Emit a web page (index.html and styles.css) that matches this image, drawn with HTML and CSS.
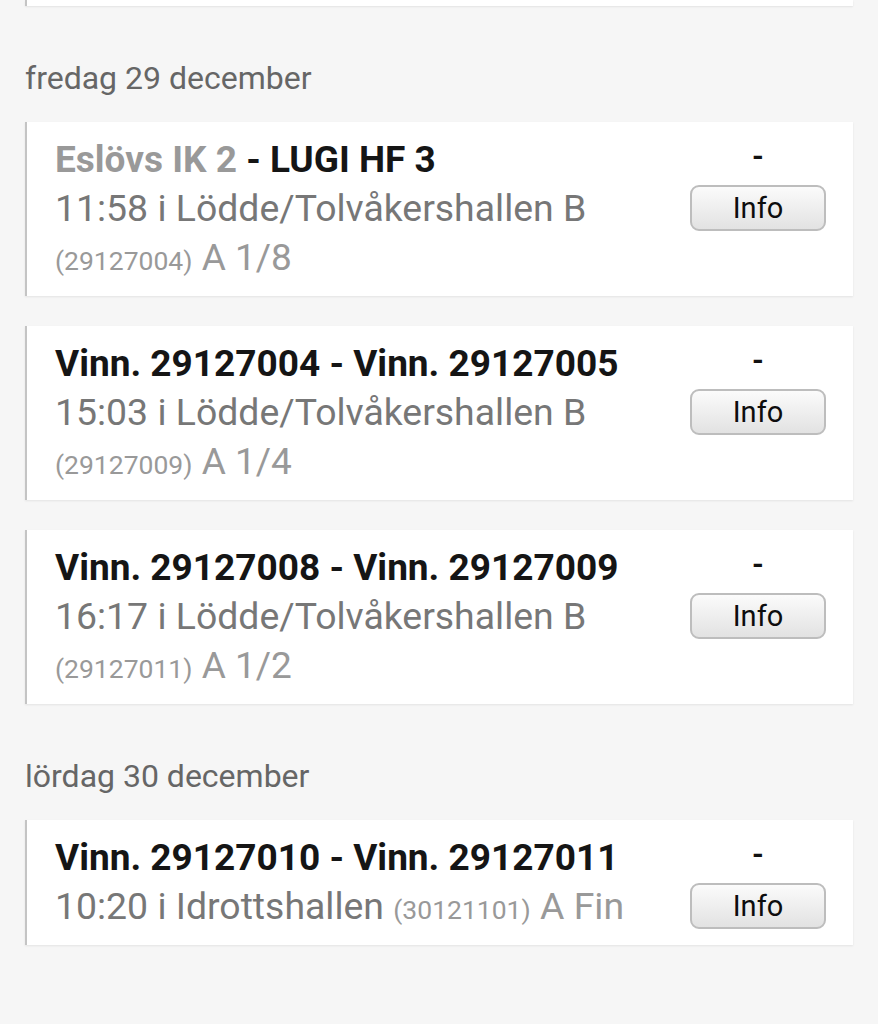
FILE: index.html
```html
<!DOCTYPE html>
<html lang="sv">
<head>
  <meta charset="UTF-8" />
  <meta name="viewport" content="width=device-width, initial-scale=1.0"/>
  <title>Matcher</title>
  <link rel="stylesheet" href="styles.css">
</head>
<body>
  <div class="match match-cut"></div>

  <h2 class="day">fredag 29 december</h2>

  <div class="match">
    <div class="info">
      <div class="teams"><span class="lost">Eslövs IK 2</span> - LUGI HF 3</div>
      <div class="where">11:58 i Lödde/Tolvåkershallen B</div>
      <div class="code"><small>(29127004)</small> A 1/8</div>
    </div>
    <div class="side">
      <div class="score">-</div>
      <button class="btn">Info</button>
    </div>
  </div>

  <div class="match">
    <div class="info">
      <div class="teams">Vinn. 29127004 - Vinn. 29127005</div>
      <div class="where">15:03 i Lödde/Tolvåkershallen B</div>
      <div class="code"><small>(29127009)</small> A 1/4</div>
    </div>
    <div class="side">
      <div class="score">-</div>
      <button class="btn">Info</button>
    </div>
  </div>

  <div class="match">
    <div class="info">
      <div class="teams">Vinn. 29127008 - Vinn. 29127009</div>
      <div class="where">16:17 i Lödde/Tolvåkershallen B</div>
      <div class="code"><small>(29127011)</small> A 1/2</div>
    </div>
    <div class="side">
      <div class="score">-</div>
      <button class="btn">Info</button>
    </div>
  </div>

  <h2 class="day">lördag 30 december</h2>

  <div class="match">
    <div class="info">
      <div class="teams">Vinn. 29127010 - Vinn. 29127011</div>
      <div class="where">10:20 i Idrottshallen <span class="code"><small>(30121101)</small> A Fin</span></div>
    </div>
    <div class="side">
      <div class="score">-</div>
      <button class="btn">Info</button>
    </div>
  </div>
</body>
</html>
```

FILE: styles.css
```css
body { margin: 0; padding: 0 25px 40px 25px; background: #f6f6f6; font-family: Roboto, "Liberation Sans", sans-serif; }

.day { margin: 0; padding: 22px 0 24px 0; height: 40px; line-height: 40px; font-size: 32px; font-weight: normal; color: #666; }

.match { display: flex; justify-content: space-between; align-items: flex-start; background: #fff; border-left: 2px solid #c4c4c4; box-shadow: 0 1px 2px rgba(0,0,0,0.08); padding: 13px 27px 14px 28px; margin-bottom: 30px; }
.match-cut { height: 6px; padding: 0; }

.info { font-size: 37px; line-height: 49px; white-space: nowrap; }
.teams { font-weight: bold; color: #151515; }
.teams .lost { color: #999; }
.where { font-size: 37.4px; color: #777; }
.code { color: #999; }
.code small { font-size: 26.5px; line-height: 1; }

.side { width: 136px; display: flex; flex-direction: column; align-items: center; }
.score { font-size: 30px; font-weight: bold; line-height: 36px; color: #111; margin-top: 3px; }
.btn { margin-top: 11px; width: 136px; height: 46px; font-family: Roboto, sans-serif; font-size: 29px; color: #0d0d0d; background: linear-gradient(#fbfbfb, #e2e2e2); border: 2px solid #bdbdbd; border-radius: 9px; padding: 0; cursor: pointer; }
```
